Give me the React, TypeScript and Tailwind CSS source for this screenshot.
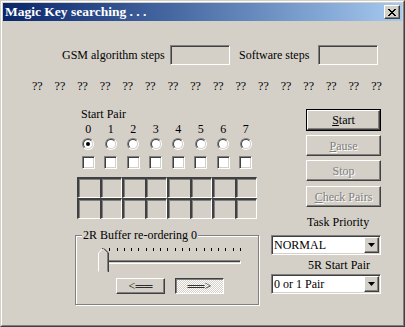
const sunken =
  'border border-t-[#808080] border-l-[#808080] border-b-white border-r-white shadow-[inset_1px_1px_0_#404040,inset_-1px_-1px_0_#d4d0c8]';
const raised =
  'border border-t-white border-l-white border-b-[#404040] border-r-[#404040] shadow-[inset_-1px_-1px_0_#808080]';
const disabledText = 'text-[#808080] [text-shadow:1px_1px_0_#ffffff]';

const cols = [0, 1, 2, 3, 4, 5, 6, 7];

function Radio({ checked }: { checked?: boolean }) {
  return (
    <div className="flex h-[12px] w-[12px] items-center justify-center rounded-full border border-t-[#808080] border-l-[#808080] border-b-white border-r-white">
      <div className="flex h-[10px] w-[10px] items-center justify-center rounded-full border border-t-[#404040] border-l-[#404040] border-b-[#d4d0c8] border-r-[#d4d0c8] bg-white">
        {checked && <div className="h-[4px] w-[4px] rounded-full bg-black" />}
      </div>
    </div>
  );
}

function Combo({ value }: { value: string }) {
  return (
    <div className={`flex h-[20px] w-[110px] items-stretch bg-white p-px ${sunken}`}>
      <div className="flex-1 pl-px leading-[16px]">{value}</div>
      <div className={`flex w-[15px] items-center justify-center bg-[#d4d0c8] ${raised}`}>
        <svg width="7" height="4" viewBox="0 0 7 4">
          <polygon points="0,0 7,0 3.5,4" fill="#000" />
        </svg>
      </div>
    </div>
  );
}

function Btn({ u, rest, disabled, mt }: { u: string; rest: string; disabled?: boolean; mt: string }) {
  return (
    <div className={`${mt} flex h-[21px] w-[75px] items-center justify-center bg-[#d4d0c8] ${raised}`}>
      <span className={disabled ? disabledText : ''}>
        <span className="underline">{u}</span>
        {rest}
      </span>
    </div>
  );
}

export default function App() {
  return (
    <div className="h-[327px] w-[405px] border border-t-[#d4d0c8] border-l-[#d4d0c8] border-b-[#404040] border-r-[#404040] bg-[#d4d0c8] font-['Liberation_Serif',serif] text-[12px] leading-[14px] text-black">
      <div className="flex h-full flex-col border border-t-white border-l-white border-b-[#808080] border-r-[#808080] p-px">
        {/* title bar */}
        <div className="flex h-[18px] items-center justify-between bg-linear-to-r from-[#0a246a] to-[#a6caf0] pl-[2px] pr-[2px]">
          <span className="text-[13.5px] font-bold text-white">Magic Key searching . . .</span>
          <div className={`flex h-[14px] w-[16px] items-center justify-center bg-[#d4d0c8] ${raised}`}>
            <svg width="8" height="7" viewBox="0 0 8 7" shapeRendering="crispEdges">
              <path d="M0 0h2v1h-2zM6 0h2v1h-2zM1 1h2v1h-2zM5 1h2v1h-2zM2 2h4v1h-4zM3 3h2v1h-2zM2 4h4v1h-4zM1 5h2v1h-2zM5 5h2v1h-2zM0 6h2v1h-2zM6 6h2v1h-2z" fill="#000" />
            </svg>
          </div>
        </div>

        {/* steps row */}
        <div className="mt-[24px] flex items-center pl-[59px]">
          <span className="w-[108px]">GSM algorithm steps</span>
          <div className={`h-[20px] w-[60px] ${sunken}`} />
          <span className="ml-[9px] w-[79px]">Software steps</span>
          <div className={`h-[20px] w-[60px] ${sunken}`} />
        </div>

        {/* key bytes */}
        <div className="ml-[29px] mt-[14px] flex w-[350px] justify-between">
          {Array.from({ length: 16 }).map((_, i) => (
            <span key={i}>??</span>
          ))}
        </div>

        <div className="ml-[72px] mt-[14px] flex gap-[12px]">
          {/* left column */}
          <div className="flex w-[184px] flex-col">
            <div className="pl-[6px]">Start Pair</div>
            <div className="ml-[2px] mt-px grid w-[180px] grid-cols-8 justify-items-center">
              {cols.map((c) => (
                <span key={c}>{c}</span>
              ))}
            </div>
            <div className="ml-[2px] mt-[2px] grid w-[180px] grid-cols-8 justify-items-center">
              {cols.map((c) => (
                <Radio key={c} checked={c === 0} />
              ))}
            </div>
            <div className="ml-[2px] mt-[6px] grid w-[180px] grid-cols-8 justify-items-center">
              {cols.map((c) => (
                <div key={c} className={`h-[13px] w-[13px] bg-white ${sunken}`} />
              ))}
            </div>
            <div className="ml-[2px] mt-[8px] grid w-[180px] grid-cols-8">
              {[...cols, ...cols].map((c, i) => (
                <div
                  key={i}
                  className={
                    c % 2 === 0
                      ? 'h-[21px] border-t-2 border-l-2 border-b border-t-[#404040] border-l-[#404040] border-b-white shadow-[inset_1px_1px_0_#808080]'
                      : 'h-[21px] border-t-2 border-l-2 border-b border-r border-t-[#404040] border-l-[#404040] border-b-white border-r-white shadow-[inset_1px_1px_0_#808080]'
                  }
                />
              ))}
            </div>

            {/* group box */}
            <div className="relative mt-[16px] h-[70px] w-[184px] border border-[#808080] shadow-[inset_1px_1px_0_#ffffff,1px_1px_0_#ffffff]">
              <span className="absolute -top-[8px] left-[6px] bg-[#d4d0c8] px-px">2R Buffer re-ordering 0</span>
              <div className="relative ml-[22px] mt-[12px] h-[24px] w-[143px]">
                <div className="ml-[4px] mt-px flex w-[139px] justify-between">
                  {Array.from({ length: 20 }).map((_, i) => (
                    <div key={i} className="h-[3px] w-px bg-black" />
                  ))}
                </div>
                <div className="ml-[2px] mt-[9px] h-[4px] w-[141px] border border-t-[#808080] border-l-[#808080] border-b-white border-r-white shadow-[inset_1px_1px_0_#404040]" />
                <svg className="absolute left-0 top-0" width="11" height="24" viewBox="0 0 11 24">
                  <polygon points="0.5,5 5.5,0 10.5,5 10.5,23.5 0.5,23.5" fill="#d4d0c8" />
                  <polyline points="0.5,23.5 0.5,5 5,0.5" fill="none" stroke="#fff" />
                  <polyline points="5.5,0.5 9.5,4.5 9.5,23.5" fill="none" stroke="#808080" />
                  <polyline points="6,0.5 10.5,5 10.5,24" fill="none" stroke="#404040" />
                </svg>
              </div>
              <div className="ml-[40px] mt-[6px] flex gap-[10px]">
                <div className={`flex h-[16px] w-[49px] items-center justify-center bg-[#d4d0c8] leading-[12px] ${raised}`}>
                  &lt;══
                </div>
                <div className="flex h-[16px] w-[49px] items-center justify-center border border-t-[#404040] border-l-[#404040] border-b-white border-r-white bg-[repeating-conic-gradient(#ffffff_0_25%,#d4d0c8_0_50%)] bg-[length:2px_2px] leading-[12px] shadow-[inset_1px_1px_0_#808080]">
                  ══&gt;
                </div>
              </div>
            </div>
          </div>

          {/* right column */}
          <div className="flex w-[110px] flex-col">
            <div className="ml-[35px] mt-[2px] h-[22px] w-[75px] border border-black">
              <div className={`flex h-full items-center justify-center bg-[#d4d0c8] ${raised}`}>
                <span>
                  <span className="underline">S</span>tart
                </span>
              </div>
            </div>
            <div className="ml-[35px]">
              <Btn u="P" rest="ause" disabled mt="mt-[4px]" />
              <Btn u="" rest="Stop" disabled mt="mt-[4px]" />
              <Btn u="C" rest="heck Pairs" disabled mt="mt-[5px]" />
            </div>
            <div className="mt-[8px] pl-[36px]">Task Priority</div>
            <div className="mt-[6px]">
              <Combo value="NORMAL" />
            </div>
            <div className="mt-[3px] pl-[37px]">5R Start Pair</div>
            <div className="mt-[2px]">
              <Combo value="0 or 1 Pair" />
            </div>
          </div>
        </div>
      </div>
    </div>
  );
}
